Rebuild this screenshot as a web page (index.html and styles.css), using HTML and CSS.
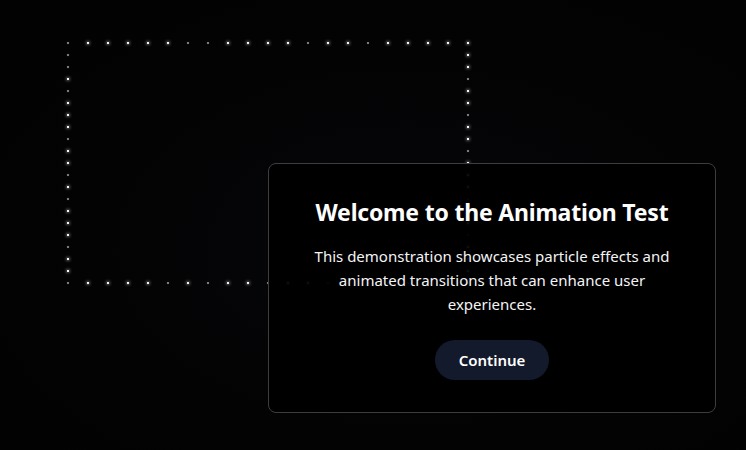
FILE: index.html
```html
<!DOCTYPE html>
<html lang="en">
<head>
<meta charset="utf-8">
<title>Animation Test</title>
<link rel="stylesheet" href="styles.css">
</head>
<body>
<div class="particles" aria-hidden="true">
  <div class="row">
    <span class="dot dim"></span><span class="dot"></span><span class="dot"></span><span class="dot"></span><span class="dot"></span><span class="dot"></span><span class="dot dim"></span><span class="dot dim"></span><span class="dot"></span><span class="dot"></span><span class="dot"></span><span class="dot"></span><span class="dot dim"></span><span class="dot"></span><span class="dot"></span><span class="dot dim"></span><span class="dot"></span><span class="dot"></span><span class="dot"></span><span class="dot"></span><span class="dot"></span>
  </div>
  <div class="sides">
    <div class="col">
      <span class="dot dim"></span><span class="dot dim"></span><span class="dot"></span><span class="dot dim"></span><span class="dot"></span><span class="dot"></span><span class="dot"></span><span class="dot dim"></span><span class="dot"></span><span class="dot"></span><span class="dot dim"></span><span class="dot"></span><span class="dot dim"></span><span class="dot"></span><span class="dot"></span><span class="dot"></span><span class="dot dim"></span><span class="dot"></span><span class="dot"></span>
    </div>
    <div class="col">
      <span class="dot"></span><span class="dot"></span><span class="dot dim"></span><span class="dot"></span><span class="dot"></span><span class="dot dim"></span><span class="dot"></span><span class="dot"></span><span class="dot dim"></span><span class="dot"></span><span class="dot"></span><span class="dot"></span><span class="dot dim"></span><span class="dot"></span><span class="dot"></span><span class="dot dim"></span><span class="dot"></span><span class="dot"></span><span class="dot"></span>
    </div>
  </div>
  <div class="row">
    <span class="dot dim"></span><span class="dot"></span><span class="dot"></span><span class="dot"></span><span class="dot"></span><span class="dot dim"></span><span class="dot"></span><span class="dot dim"></span><span class="dot"></span><span class="dot"></span><span class="dot dim"></span><span class="dot"></span><span class="dot"></span><span class="dot dim"></span><span class="dot"></span><span class="dot"></span><span class="dot"></span><span class="dot dim"></span><span class="dot"></span><span class="dot"></span><span class="dot"></span>
  </div>
</div>

<main class="stage">
  <section class="card">
    <h1 class="title">Welcome to the Animation Test</h1>
    <p class="text">This demonstration showcases particle effects and animated transitions that can enhance user experiences.</p>
    <button class="btn" type="button">Continue</button>
  </section>
</main>
</body>
</html>
```
FILE: styles.css
```css
* { box-sizing: border-box; }

html, body {
  margin: 0;
  height: 100%;
}

body {
  background: radial-gradient(ellipse at 55% 55%, #060709 0%, #030304 55%, #020202 100%);
  font-family: "Noto Sans", "Open Sans", sans-serif;
  color: #fff;
  overflow: hidden;
}

.particles {
  position: absolute;
  left: 67px;
  top: 42px;
  width: 402px;
  height: 242px;
  display: flex;
  flex-direction: column;
}

.row {
  display: flex;
  justify-content: space-between;
  height: 2px;
}

.sides {
  flex: 1;
  display: flex;
  justify-content: space-between;
}

.col {
  display: flex;
  flex-direction: column;
  gap: 10px;
  padding: 10px 0;
}

.dot {
  display: block;
  width: 2px;
  height: 2px;
  background: #f4f4f4;
  box-shadow: 0 0 3px 1px rgba(255, 255, 255, 0.35);
}

.dot.dim {
  background: #7a7a7a;
  box-shadow: 0 0 2px rgba(255, 255, 255, 0.15);
}

.stage {
  padding: 163px 0 0 268px;
}

.card {
  position: relative;
  z-index: 1;
  width: 448px;
  padding: 32px;
  border: 1px solid #3d3d40;
  border-radius: 8px;
  background: rgba(0, 0, 0, 0.94);
  text-align: center;
}

.title {
  margin: 0;
  font-size: 23px;
  line-height: 32px;
  font-weight: 700;
  letter-spacing: -0.2px;
}

.text {
  margin: 16px 0 0;
  font-size: 15px;
  line-height: 24px;
  color: #f4f4f6;
}

.btn {
  margin-top: 24px;
  height: 40px;
  padding: 0 24px;
  border: 0;
  border-radius: 9999px;
  background: #121a2b;
  color: #fff;
  font-family: inherit;
  font-size: 15px;
  font-weight: 600;
}
```
